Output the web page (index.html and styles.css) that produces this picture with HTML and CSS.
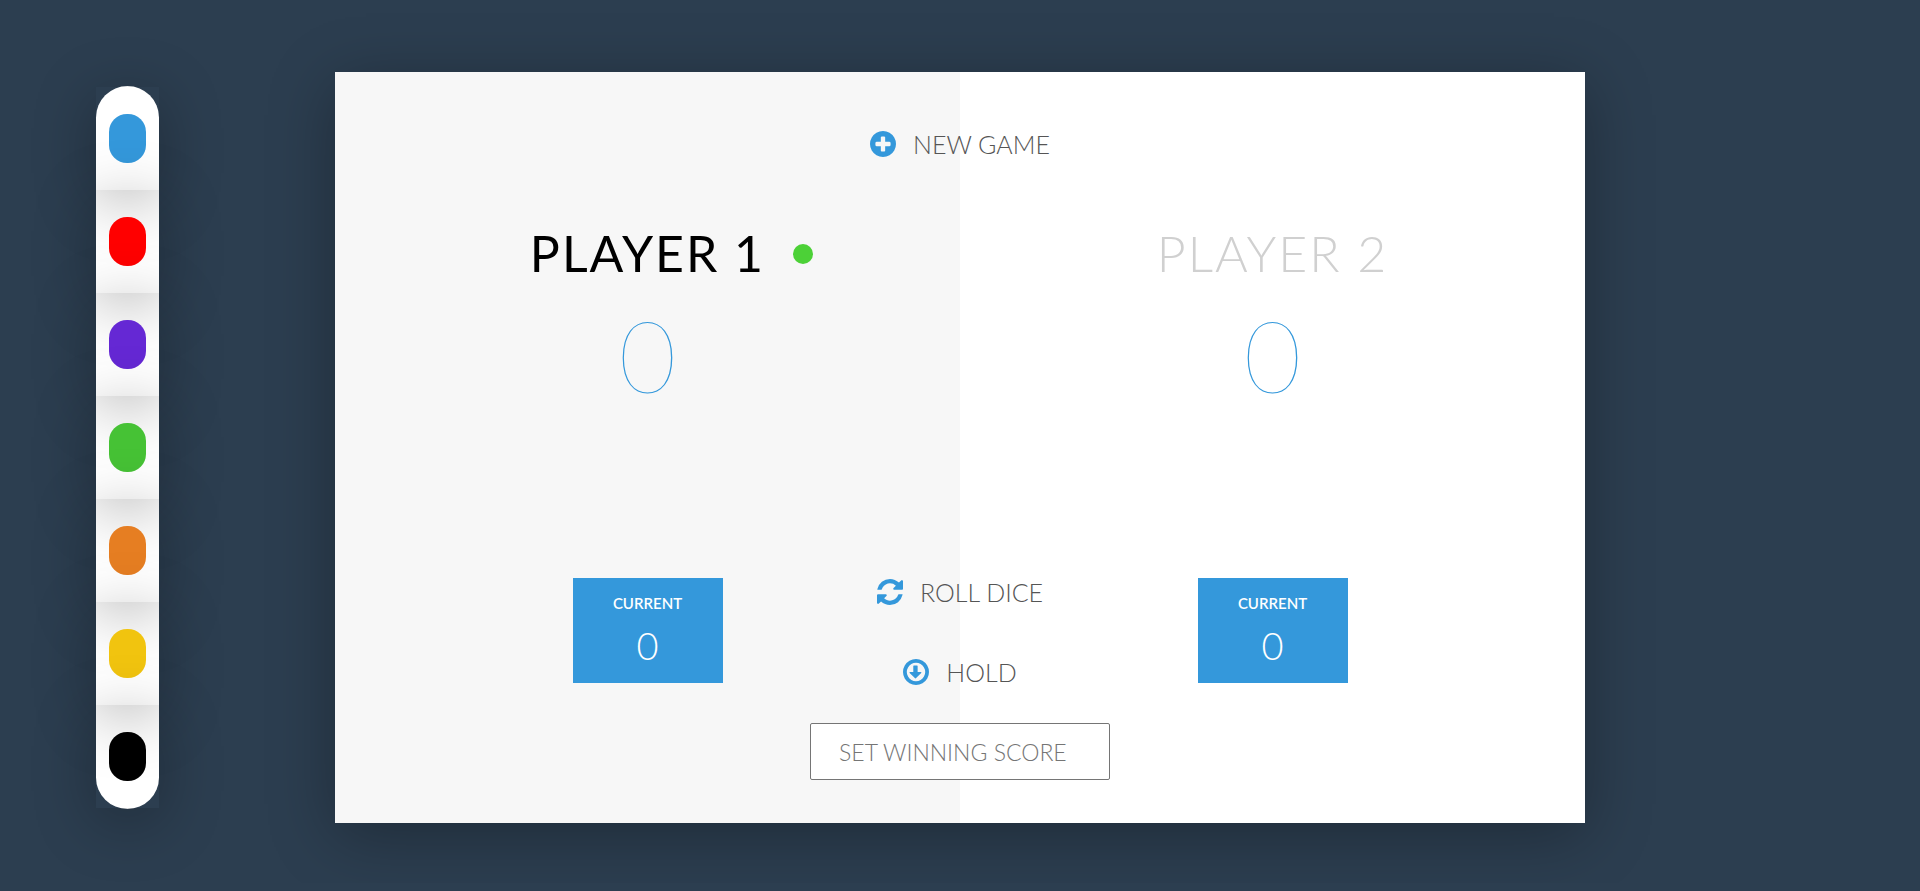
FILE: index.html
```html
<!DOCTYPE html>
<html lang="en">
<head>
  <meta charset="UTF-8">
  <meta name="viewport" content="width=device-width, initial-scale=1.0">
  <title>Dice Game</title>
  <link rel="stylesheet" href="styles.css">
</head>
<body>
  <div class="page">
    <!-- Theme colors -->
    <div class="palette">
      <button class="swatch" aria-label="Blue"><span class="color blue"></span></button>
      <button class="swatch" aria-label="Red"><span class="color red"></span></button>
      <button class="swatch" aria-label="Purple"><span class="color purple"></span></button>
      <button class="swatch" aria-label="Green"><span class="color green"></span></button>
      <button class="swatch" aria-label="Orange"><span class="color orange"></span></button>
      <button class="swatch" aria-label="Yellow"><span class="color yellow"></span></button>
      <button class="swatch" aria-label="Black"><span class="color black"></span></button>
    </div>

    <main class="game">
      <section class="player player-left active">
        <h2 class="player-name">Player 1</h2>
        <div class="player-score">0</div>
        <div class="current-box">
          <div class="current-label">Current</div>
          <div class="current-score">0</div>
        </div>
      </section>

      <section class="player player-right">
        <h2 class="player-name">Player 2</h2>
        <div class="player-score">0</div>
        <div class="current-box">
          <div class="current-label">Current</div>
          <div class="current-score">0</div>
        </div>
      </section>

      <div class="controls">
        <button class="btn btn-new">
          <svg class="icon" viewBox="128 128 1536 1536" aria-hidden="true"><path d="M1344 960v-128q0-26-19-45t-45-19h-256v-256q0-26-19-45t-45-19h-128q-26 0-45 19t-19 45v256h-256q-26 0-45 19t-19 45v128q0 26 19 45t45 19h256v256q0 26 19 45t45 19h128q26 0 45-19t19-45v-256h256q26 0 45-19t19-45zm320-64q0 209-103 385.5t-279.5 279.5-385.5 103-385.5-103-279.5-279.5-103-385.5 103-385.5 279.5-279.5 385.5-103 385.5 103 279.5 279.5 103 385.5z"/></svg>
          New game
        </button>
        <button class="btn btn-roll">
          <svg class="icon" viewBox="128 128 1536 1536" aria-hidden="true"><path d="M1639 1056q0 5-1 7-64 268-268 434.5t-478 166.5q-146 0-282.5-55t-243.5-157l-129 129q-19 19-45 19t-45-19-19-45v-448q0-26 19-45t45-19h448q26 0 45 19t19 45-19 45l-137 137q71 66 161 102t187 36q134 0 250-65t186-179q11-17 53-117 8-23 30-23h192q13 0 22.5 9.5t9.5 22.5zm25-800v448q0 26-19 45t-45 19h-448q-26 0-45-19t-19-45 19-45l138-138q-148-137-349-137-134 0-250 65t-186 179q-11 17-53 117-8 23-30 23h-199q-13 0-22.5-9.5t-9.5-22.5v-7q65-268 270-434.5t480-166.5q146 0 284 55.5t245 156.5l130-129q19-19 45-19t45 19 19 45z"/></svg>
          Roll dice
        </button>
        <button class="btn btn-hold">
          <svg class="icon" viewBox="128 128 1536 1536" aria-hidden="true"><path d="M1216 928q0 14-10 24l-319 319q-10 9-23 9t-23-9l-320-320q-15-16-7-35 8-20 30-20h192v-352q0-14 9-23t23-9h192q14 0 23 9t9 23v352h192q14 0 23 9t9 23zm-320-576q-148 0-273 73t-198 198-73 273 73 273 198 198 273 73 273-73 198-198 73-273-73-273-198-198-273-73zm768 544q0 209-103 385.5t-279.5 279.5-385.5 103-385.5-103-279.5-279.5-103-385.5 103-385.5 279.5-279.5 385.5-103 385.5 103 279.5 279.5 103 385.5z"/></svg>
          Hold
        </button>
        <input type="text" class="winning-score" placeholder="SET WINNING SCORE" aria-label="Set winning score">
      </div>
    </main>
  </div>
</body>
</html>
```
FILE: styles.css
```css
* { box-sizing: border-box; margin: 0; padding: 0; }
body { font-family: Lato, sans-serif; font-weight: 300; background: #2c3e50; color: #555; }
button, input { font: inherit; color: inherit; }
button { border: none; background: none; cursor: pointer; }

.page { display: grid; grid-template-columns: 1fr minmax(0, 1250px) 1fr; align-items: center; padding: 72px 0 60px; }

/* Palette */
.palette { display: flex; flex-direction: column; width: 63px; margin-left: 5vw; padding: 1px 0; background: #fff; border-radius: 32px; }
.swatch { display: flex; justify-content: center; padding: 27px 0; box-shadow: 0 12px 62px rgba(0, 0, 0, 0.3); }
.color { width: 37px; height: 49px; border-radius: 18px; }
.blue { background: #3498db; }
.red { background: #ff0000; }
.purple { background: #6528d4; }
.green { background: #46c235; }
.orange { background: #e67e22; }
.yellow { background: #f1c40f; }
.black { background: #000; }

/* Board */
.game { display: grid; grid-template-columns: 1fr 1fr; background: #fff; box-shadow: 0 12px 62px rgba(0, 0, 0, 0.3); }
.player { grid-row: 1; display: flex; flex-direction: column; align-items: center; padding: 151px 0 140px; }
.player-left { grid-column: 1; }
.player-right { grid-column: 2; }
.player.active { background: #f7f7f7; }
.player-name { position: relative; font-size: 50px; line-height: 60px; font-weight: 300; letter-spacing: 2px; text-transform: uppercase; color: #d0d0d0; }
.active .player-name { font-weight: 400; color: #000; }
.active .player-name::after { content: ""; position: absolute; top: 21px; right: -48px; width: 20px; height: 20px; border-radius: 50%; background: #4cd137; }
.player-score { margin: 11px 0 164px; font-size: 100px; line-height: 120px; font-weight: 100; color: #3498db; }
.current-box { width: 150px; padding: 15px; background: #3498db; color: #fff; text-align: center; }
.current-label { font-size: 15px; line-height: 20px; font-weight: 600; text-transform: uppercase; }
.current-score { margin-top: 10px; font-size: 38px; line-height: 45px; }

/* Buttons over both panels */
.controls { grid-row: 1; grid-column: 1 / 3; justify-self: center; display: flex; flex-direction: column; align-items: center; padding: 52px 0 43px; }
.btn { display: flex; align-items: center; gap: 17px; height: 40px; font-size: 25px; font-weight: 300; text-transform: uppercase; }
.btn-new { margin-bottom: auto; }
.btn-roll { margin-bottom: 40px; }
.icon { width: 26px; height: 26px; fill: #3498db; }
.winning-score { width: 300px; height: 57px; margin-top: 31px; padding: 0 28px; border: 1px solid #757575; border-radius: 2px; background: #fff; font-size: 23px; font-weight: 300; }
.winning-score::placeholder { color: #757575; opacity: 1; }
```
